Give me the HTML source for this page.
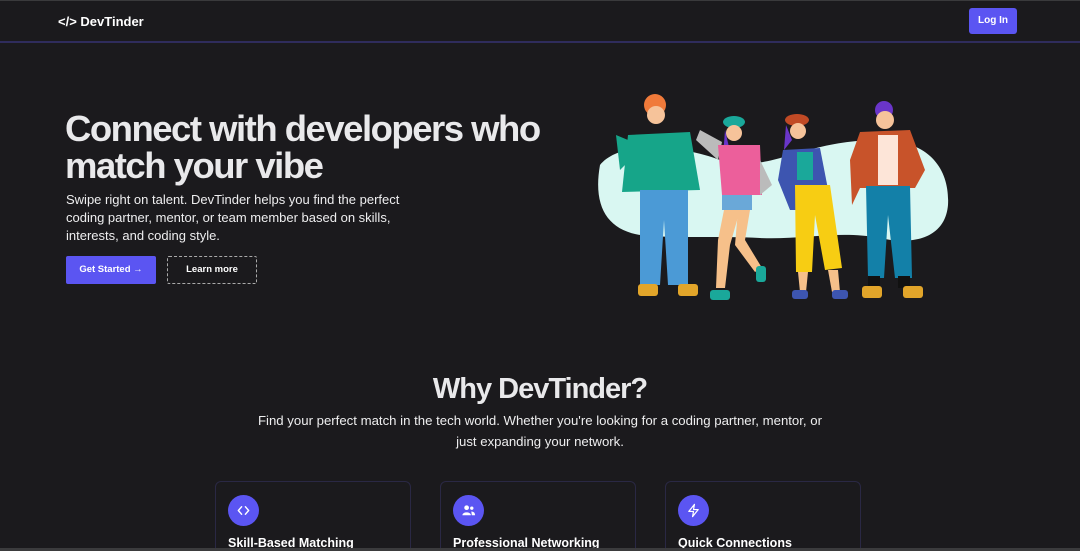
<!DOCTYPE html>
<html><head><meta charset="utf-8"><style>
*{margin:0;padding:0;box-sizing:border-box}
html,body{width:1080px;height:551px;overflow:hidden}
body{background:#1b1a1d;font-family:"Liberation Sans",sans-serif;color:#e8e8ea;position:relative}
.nav{position:absolute;left:0;top:0;width:1080px;height:43px;border-top:1px solid #3a3a3c;border-bottom:2px solid #2f2c5c;background:#1b1a1d}
.logo{position:absolute;left:58px;top:13px;font-weight:bold;font-size:13px;color:#fff}
.login{position:absolute;left:969px;top:7px;width:48px;height:26px;background:#5b55f2;border-radius:3px;color:#fff;font-size:10px;font-weight:bold;text-align:center;line-height:26px}
h1{position:absolute;left:65px;top:110px;font-size:36.5px;line-height:37px;letter-spacing:-1.5px;font-weight:bold;color:#e9e9eb}
.p1{position:absolute;left:66px;top:191px;font-size:13px;line-height:18px;color:#eeeeef;width:360px}
.b1{position:absolute;left:66px;top:256px;width:90px;height:28px;background:#5b55f2;border-radius:2px;color:#fff;font-size:9.5px;font-weight:bold;text-align:center;line-height:28px}
.b2{position:absolute;left:167px;top:256px;width:90px;height:28px;border:1px dashed #aaa;border-radius:2px;color:#fff;font-size:9.5px;font-weight:bold;text-align:center;line-height:26px}
h2{position:absolute;left:0;width:1080px;top:373px;text-align:center;font-size:29px;letter-spacing:-1px;font-weight:bold;color:#e9e9eb}
.p2{position:absolute;left:0;width:1080px;top:410px;text-align:center;font-size:13.2px;line-height:21px;color:#eeeeef}
.card{position:absolute;top:481px;width:196px;height:80px;border:1px solid #2a2844;border-radius:6px}
.ic{position:absolute;left:12px;top:13px;width:31px;height:31px;border-radius:50%;background:#5b55f2}
.ic svg{position:absolute;left:8px;top:8px}
.ct{position:absolute;left:12px;top:54px;font-size:12.5px;font-weight:bold;color:#fff}
.bar{position:absolute;left:0;top:548px;width:1080px;height:3px;background:#3b3b3d}
</style></head><body>
<div class="nav"><div class="logo">&lt;/&gt; DevTinder</div><div class="login">Log In</div></div>
<h1>Connect with developers who<br>match your vibe</h1>
<div class="p1">Swipe right on talent. DevTinder helps you find the perfect coding partner, mentor, or team member based on skills, interests, and coding style.</div>
<div class="b1">Get Started →</div>
<div class="b2">Learn more</div>
<svg style="position:absolute;left:0;top:0" width="1080" height="551">
<path d="M600 165 C620 140,680 145,720 160 C770 175,800 140,880 140 C930 140,950 170,948 205 C945 240,910 245,880 238 C840 230,800 240,760 238 C720 236,690 238,650 236 C610 234,592 210,600 165Z" fill="#d9f7f2"/>
<circle cx="655" cy="105" r="11" fill="#f07a3a"/><circle cx="656" cy="115" r="9" fill="#f6c39a"/>
<path d="M628 135 L690 132 L700 190 L622 192Z" fill="#16a589"/>
<path d="M628 140 L616 135 L620 170 L630 160Z" fill="#16a589"/>
<rect x="645" y="190" width="23" height="12" rx="5" fill="#3c5a78"/>
<path d="M640 190 L688 190 L688 285 L668 285 L664 220 L660 285 L640 285Z" fill="#4b9ad6"/>
<rect x="638" y="284" width="20" height="12" rx="3" fill="#e2a52a"/><rect x="678" y="284" width="20" height="12" rx="3" fill="#e2a52a"/>
<ellipse cx="734" cy="122" rx="11" ry="6" fill="#1aa89a"/><circle cx="734" cy="133" r="8" fill="#f6c39a"/>
<path d="M725 130 L722 170 L732 160Z" fill="#6a35c9"/>
<path d="M700 130 L722 142 L718 160 L696 140Z" fill="#bbb"/>
<path d="M718 145 L760 145 L762 195 L722 195Z" fill="#ec5f9b"/>
<path d="M760 160 L772 185 L760 195Z" fill="#bbb"/>
<rect x="722" y="195" width="30" height="15" fill="#6aa8d8"/>
<path d="M724 210 L740 210 L730 245 L725 288 L716 288 L718 240Z" fill="#f6c08a"/>
<path d="M738 210 L750 210 L745 240 L762 268 L755 272 L735 245Z" fill="#f6c08a"/>
<rect x="710" y="290" width="20" height="10" rx="3" fill="#1aa89a"/><rect x="756" y="266" width="10" height="16" rx="3" fill="#1aa89a"/>
<ellipse cx="797" cy="120" rx="12" ry="6" fill="#c14a25"/><circle cx="798" cy="131" r="8" fill="#f6c39a"/>
<path d="M786 125 L784 150 L792 140Z" fill="#6a35c9"/>
<path d="M783 150 L820 148 L832 210 L790 210 L778 180Z" fill="#3d55b0"/>
<rect x="797" y="152" width="16" height="28" fill="#1aa89a"/>
<path d="M795 185 L830 185 L842 268 L825 270 L815 215 L812 272 L796 272Z" fill="#f7cd13"/>
<path d="M798 272 L808 272 L806 292 L800 292Z" fill="#f6c08a"/><path d="M828 270 L838 270 L840 292 L832 292Z" fill="#f6c08a"/>
<rect x="792" y="290" width="16" height="9" rx="3" fill="#3d55b0"/><rect x="832" y="290" width="16" height="9" rx="3" fill="#3d55b0"/>
<circle cx="884" cy="110" r="9" fill="#6a35c9"/><circle cx="885" cy="120" r="9" fill="#f6c39a"/>
<path d="M860 132 L910 130 L925 170 L915 188 L860 188 L852 205 L850 160Z" fill="#c8532a"/>
<rect x="878" y="135" width="20" height="50" fill="#fde5d8"/>
<path d="M866 186 L910 186 L912 278 L895 278 L888 215 L884 278 L868 278Z" fill="#1380a8"/>
<rect x="868" y="276" width="12" height="12" fill="#111"/><rect x="898" y="276" width="12" height="12" fill="#111"/>
<rect x="862" y="286" width="20" height="12" rx="3" fill="#e2a52a"/><rect x="903" y="286" width="20" height="12" rx="3" fill="#e2a52a"/>
</svg>
<h2>Why DevTinder?</h2>
<div class="p2">Find your perfect match in the tech world. Whether you're looking for a coding partner, mentor, or<br>just expanding your network.</div>
<div class="card" style="left:215px"><div class="ic"><svg width="15" height="15" viewBox="0 0 16 16" fill="none" stroke="#fff" stroke-width="1.5" stroke-linecap="round" stroke-linejoin="round"><path d="M6 4 L2.5 8 L6 12 M10 4 L13.5 8 L10 12"/></svg></div><div class="ct">Skill-Based Matching</div></div>
<div class="card" style="left:440px"><div class="ic"><svg width="15" height="15" viewBox="0 0 16 16" fill="#fff"><circle cx="6" cy="5" r="2.5"/><path d="M1.5 13 C1.5 9,10.5 9,10.5 13Z"/><circle cx="11.5" cy="5.5" r="1.8"/><path d="M11 9 C14 9,15 11,15 13 L11.5 13 Z"/></svg></div><div class="ct">Professional Networking</div></div>
<div class="card" style="left:665px"><div class="ic"><svg width="15" height="15" viewBox="0 0 16 16" fill="none" stroke="#fff" stroke-width="1.3" stroke-linejoin="round"><path d="M9 1.5 L3 9 H8 L7 14.5 L13 7 H8Z"/></svg></div><div class="ct">Quick Connections</div></div>
<div class="bar"></div>
</body></html>
